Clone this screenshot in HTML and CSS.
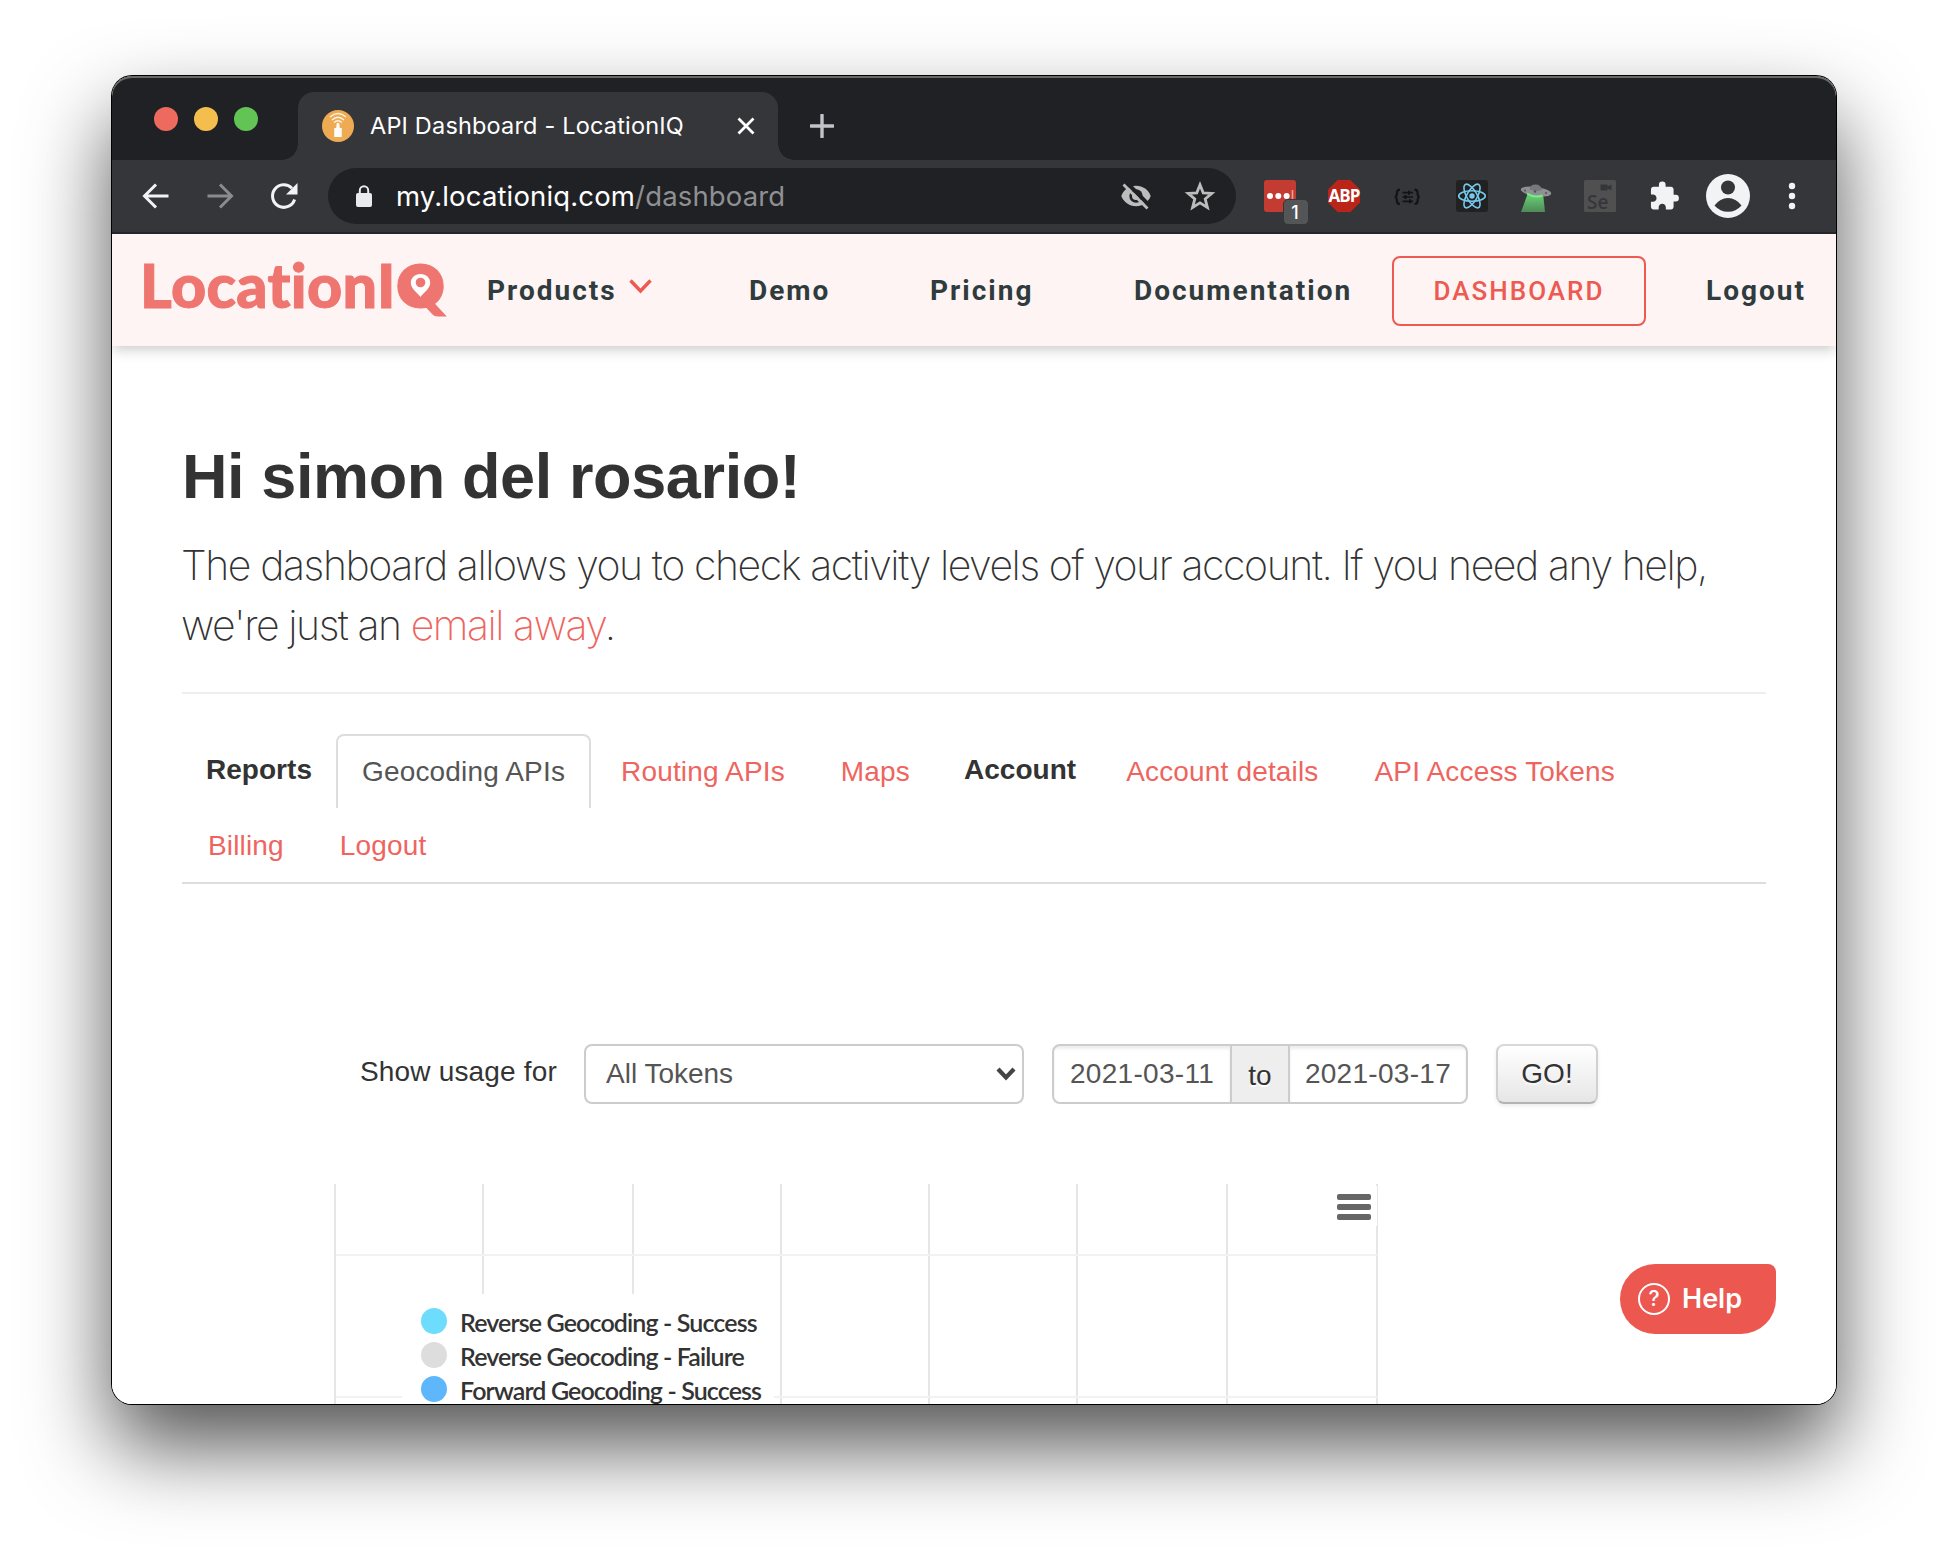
FILE: index.html
```html
<!DOCTYPE html>
<html lang="en">
<head>
<meta charset="utf-8">
<title>API Dashboard - LocationIQ</title>
<link rel="stylesheet" href="styles.css">
</head>
<body>
<div class="window">
  <div class="tabstrip">
    <div class="lights"><i class="red"></i><i class="yellow"></i><i class="green"></i></div>
    <div class="tab">
      <svg class="favicon" width="32" height="32" viewBox="0 0 32 32"><circle cx="16" cy="16" r="16" fill="#efab53"/><g fill="none" stroke="#fff" stroke-width="1.300" opacity=".85"><path d="M8 7Q16 0 24 7M10 10Q16 4.500 22 10M12 12.500Q16 9 20 12.500"/></g><path d="M14.800 13h2.400l.6 5h2v9h-7.600v-9h2z" fill="#fff" opacity=".95"/></svg>
      <span class="tab-title">API Dashboard - LocationIQ</span>
      <svg class="tab-close" width="20" height="20" viewBox="0 0 20 20"><path d="M2.500 2.500l15 15m0-15l-15 15" stroke="#fff" stroke-width="2.800"/></svg>
    </div>
    <svg class="newtab" width="24" height="24" viewBox="0 0 24 24"><path d="M12 1v22M1 12h22" stroke="#c0c4c9" stroke-width="3.400" stroke-linecap="round"/></svg>
  </div>

  <div class="toolbar">
    <svg class="nav-ico" width="32" height="32" viewBox="0 0 32 32"><path d="M28.500 16H5M16 4.500L4.500 16 16 27.500" fill="none" stroke="#f1f3f4" stroke-width="3"/></svg>
    <svg class="nav-ico" width="32" height="32" viewBox="0 0 32 32"><path d="M3.500 16H27M16 4.500L27.500 16 16 27.500" fill="none" stroke="#8a8b8e" stroke-width="3"/></svg>
    <svg class="nav-ico" width="32" height="32" viewBox="0 0 32 32"><path d="M26.600 19.500A11.300 11.300 0 1 1 24 8.200" fill="none" stroke="#f1f3f4" stroke-width="3"/><path d="M29.500 3v11.500H18z" fill="#f1f3f4"/></svg>
    <div class="omnibox">
      <svg width="18" height="22" viewBox="0 0 18 22"><rect x="1" y="8" width="16" height="14" rx="2" fill="#e8eaed"/><path d="M4.800 9V5.500a4.200 4.200 0 0 1 8.400 0V9" fill="none" stroke="#e8eaed" stroke-width="2"/></svg>
      <span class="url">my.locationiq.com<span class="path">/dashboard</span></span>
      <svg class="eye" width="32" height="32" viewBox="0 0 32 32"><path d="M16 5.800C9 5.800 3.500 10 1.300 16 3.500 22 9 26.200 16 26.200S28.500 22 30.700 16C28.500 10 23 5.800 16 5.800z" fill="#bdbdbd"/><circle cx="16" cy="16" r="6.700" fill="#202124"/><circle cx="16" cy="16" r="4" fill="#bdbdbd"/><path d="M5.500 1.500L31 27" stroke="#202124" stroke-width="4"/><path d="M3.500 4.500l24 24" stroke="#bdbdbd" stroke-width="2.800"/></svg>
      <svg class="star" width="32" height="32" viewBox="0 0 32 32"><path d="M16 4.800l3.200 8 8.600.6-6.600 5.500 2.200 8.500-7.400-4.600-7.400 4.600 2.200-8.500-6.600-5.500 8.600-.6z" fill="none" stroke="#bdbdbd" stroke-width="2.800"/></svg>
    </div>
    <div class="extensions">
      <div class="ext">
        <svg width="32" height="32" viewBox="0 0 32 32"><rect width="32" height="32" rx="3" fill="#c43b31"/><g fill="#fff"><circle cx="6" cy="16" r="3"/><circle cx="14.300" cy="16" r="3"/><circle cx="22.600" cy="16" r="3"/></g><path d="M28.500 10v10" stroke="#e9a09b" stroke-width="1.600"/></svg>
        <span class="badge">1</span>
      </div>
      <div class="ext">
        <svg width="32" height="32" viewBox="0 0 32 32"><path d="M9.500 0h13L32 9.500v13L22.500 32h-13L0 22.500v-13z" fill="#bb2418"/></svg>
        <span class="abp">ABP</span>
      </div>
      <svg width="32" height="32" viewBox="0 0 32 32"><g fill="none" stroke="#121314" stroke-width="2.200"><path d="M8 9.700Q5 9.700 5 12.500 5 16.500 3 17 5 17.500 5 21.500 5 24 8 24M22.500 9.700q3 0 3 2.800 0 4 2 4.500-2 .5-2 4.500 0 2.500-3 2.500"/><path d="M10.500 12.700h10.500M10.500 17h10.500M10.500 21.300h10.500" stroke-width="1.700"/><path d="M17 10.700v4M13.500 15v4M18 19.300v4" stroke-width="2"/></g></svg>
      <svg width="32" height="32" viewBox="0 0 32 32"><rect width="32" height="32" rx="3" fill="#212121"/><circle cx="16" cy="16" r="2.700" fill="#74c9ef"/><g fill="none" stroke="#74c9ef" stroke-width="1.600"><ellipse cx="16" cy="16" rx="13.300" ry="5.200"/><ellipse cx="16" cy="16" rx="13.300" ry="5.200" transform="rotate(60 16 16)"/><ellipse cx="16" cy="16" rx="13.300" ry="5.200" transform="rotate(120 16 16)"/></g></svg>
      <svg width="32" height="32" viewBox="0 0 32 32"><defs><linearGradient id="beam" x2="0" y2="1"><stop stop-color="#69d877"/><stop offset="1" stop-color="#4f8a57"/></linearGradient></defs><path d="M8 13h15l2 19H1z" fill="url(#beam)"/><ellipse cx="16" cy="11.500" rx="15.300" ry="4.600" transform="rotate(8 16 11.500)" fill="#8f9092"/><path d="M9.500 9.500Q10 4.500 15.500 4.500t6.500 5.500q-6 2-12.500-.5z" fill="#77787b"/><path d="M7 13.500q7 4.500 15.500 2" fill="none" stroke="#78ef88" stroke-width="2"/><g fill="#515255"><circle cx="5" cy="10.500" r="1"/><circle cx="15" cy="11.500" r="1.200"/><circle cx="26" cy="13" r="1"/></g></svg>
      <div class="ext">
        <svg width="32" height="32" viewBox="0 0 32 32"><rect width="32" height="32" rx="1.500" fill="#505050"/><path d="M16.500 4.500h7v2l4-2v6l-4-2v2h-7z" fill="#35363a"/></svg>
        <span class="se">Se</span>
      </div>
      <svg width="32" height="32" viewBox="0 0 24 24"><path transform="translate(.2 .1)" d="M20.500 11H19V7c0-1.100-.9-2-2-2h-4V3.500a2.500 2.500 0 0 0-5 0V5H4c-1.100 0-1.990.9-1.990 2v3.800H3.500c1.490 0 2.700 1.210 2.700 2.700s-1.210 2.700-2.700 2.700H2V20c0 1.100.9 2 2 2h3.800v-1.500c0-1.490 1.210-2.700 2.700-2.700s2.700 1.210 2.700 2.700V22H17c1.100 0 2-.9 2-2v-4h1.500a2.500 2.500 0 0 0 0-5z" fill="#f1f3f4"/></svg>
      <svg class="avatar" width="44" height="44" viewBox="0 0 44 44"><circle cx="22" cy="22" r="22" fill="#f1f3f4"/><circle cx="22" cy="13.500" r="7" fill="#35363a"/><path d="M8.500 31.500Q14 24 22 24t13.500 7.500Q30 37.800 22 37.800T8.500 31.500z" fill="#35363a"/></svg>
      <svg class="kebab" width="8" height="32" viewBox="0 0 8 32"><g fill="#f1f3f4"><circle cx="4" cy="6" r="3.200"/><circle cx="4" cy="16" r="3.200"/><circle cx="4" cy="26" r="3.200"/></g></svg>
    </div>
  </div>

  <div class="page">
    <header class="navbar">
      <a class="logo">LocationI<span class="logo-q">Q<svg width="46" height="44" viewBox="0 0 46 44"><ellipse cx="23" cy="22" rx="21.500" ry="21" fill="#ef7570"/><path d="M23.500 11c-5.700 0-9.700 4-9.700 8.700 0 6 6.500 9.600 9.700 14.300 3.200-4.700 9.700-8.300 9.700-14.300 0-4.700-4-8.700-9.700-8.700z" fill="#fff"/><circle cx="23.500" cy="19.500" r="4.800" fill="#ef7570"/></svg></span></a>
      <a>Products<svg class="caret" width="23" height="15" viewBox="0 0 23 15"><path d="M1.500 1.500l10 10.500 10-10.500" fill="none" stroke="#ee5a52" stroke-width="3.400"/></svg></a>
      <a>Demo</a>
      <a>Pricing</a>
      <a>Documentation</a>
      <a class="dash-btn">DASHBOARD</a>
      <a class="logout">Logout</a>
    </header>

    <main class="content">
      <h1>Hi simon del rosario!</h1>
      <p class="lead"><span class="line1">The dashboard allows you to check activity levels of your account. If you need any help,</span><br><span class="line2">we're just an <a>email away</a>.</span></p>
      <hr>
      <ul class="tabs">
        <li class="head">Reports</li>
        <li class="active">Geocoding APIs</li>
        <li>Routing APIs</li>
        <li>Maps</li>
        <li class="head">Account</li>
        <li>Account details</li>
        <li>API Access Tokens</li>
        <li>Billing</li>
        <li>Logout</li>
      </ul>

      <form class="filters">
        <label>Show usage for</label>
        <div class="select">All Tokens<svg width="20" height="14" viewBox="0 0 20 14"><path d="M2 2l8 8.500L18 2" fill="none" stroke="#444" stroke-width="4.200"/></svg></div>
        <div class="range"><span class="date">2021-03-11</span><span class="to">to</span><span class="date">2021-03-17</span></div>
        <div class="go">GO!</div>
      </form>

      <div class="chart">
        <svg class="grid" width="1044" height="220" viewBox="0 0 1044 220"><path d="M1 0v220M149 0v220M299 0v220M447 0v220M595 0v220M743 0v220M893 0v220M1043 0v220" stroke="#e4e4e4" stroke-width="1.800"/><path d="M2 71h1041M2 213h1041" stroke="#f2f2f2" stroke-width="2"/></svg>
        <div class="legend">
          <div><i class="cyan"></i>Reverse Geocoding - Success</div>
          <div><i class="grey"></i>Reverse Geocoding - Failure</div>
          <div><i class="blue"></i>Forward Geocoding - Success</div>
        </div>
        <div class="menu"><i></i><i></i><i></i></div>
      </div>
    </main>
    <div class="help"><span class="q">?</span>Help</div>
  </div>
</div>
</body>
</html>
```
FILE: styles.css
```css
* { box-sizing: border-box; }
body { margin: 0; padding: 76px 112px 148px; background: #fff; overflow: hidden; }
svg { display: block; flex: none; }
i { display: block; }

.window {
  position: relative;
  width: 1724px; height: 1328px;
  border-radius: 20px;
  overflow: hidden;
  background: #fff;
  box-shadow: 0 0 0 1px #000, 0 42px 84px rgba(0, 0, 0, .68);
}

/* Browser chrome */
.tabstrip {
  display: flex; align-items: flex-start;
  height: 84px; background: #202124;
  border-radius: 20px 20px 0 0;
  box-shadow: inset 0 2px 0 #686a6a;
}
.lights { display: flex; gap: 16px; padding: 31px 41px 0 42px; }
.lights i { width: 24px; height: 24px; border-radius: 50%; }
.red { background: #ed6a5e; }
.yellow { background: #f4be4f; }
.green { background: #61c454; }
.tab {
  position: relative;
  display: flex; align-items: center;
  width: 480px; height: 68px; margin: 16px 0 0 -1px;
  padding: 0 22px 0 24px;
  background: #35363a; border-radius: 16px 16px 0 0;
}
.tab::before, .tab::after {
  content: ""; position: absolute; bottom: 0; width: 16px; height: 16px;
}
.tab::before { left: -16px; background: radial-gradient(circle at 0 0, #202124 15.5px, #35363a 16px); }
.tab::after { right: -16px; background: radial-gradient(circle at 100% 0, #202124 15.5px, #35363a 16px); }
.tab-title {
  flex: 1; margin-left: 16px; white-space: nowrap;
  font: 400 23.5px/32px Inter, sans-serif; letter-spacing: .18px; color: #fff;
}
.newtab { margin: 38px 0 0 32px; }

.toolbar {
  display: flex; align-items: center;
  height: 74px; padding: 0 0 0 28px;
  background: #35363a; border-bottom: 2px solid #26272a;
}
.nav-ico { margin-right: 32px; }
.omnibox {
  display: flex; align-items: center;
  width: 908px; height: 56px; margin-left: -4px; padding: 0 20px 0 27px;
  border-radius: 28px; background: #202124;
}
.url { flex: 1; margin-left: 23px; font: 400 27.5px/40px Inter, sans-serif; letter-spacing: .15px; color: #fff; }
.path { color: #8f9093; }
.eye { margin-right: 32px; }
.extensions { display: flex; align-items: center; gap: 32px; margin-left: 28px; }
.ext { position: relative; }
.badge {
  position: absolute; left: 19px; top: 19px; width: 26px; height: 26px;
  border: 1px solid #35363a; border-radius: 5px; background: #545557;
  font: 500 18px/25px Inter, sans-serif; color: #fff; text-align: center; padding-right: 2px;
}
.abp {
  position: absolute; inset: 0; text-align: center; letter-spacing: -.9px;
  font: 700 17px/32px "Open Sans", sans-serif; color: #fff;
}
.se { position: absolute; left: 3px; top: 11px; font: 600 19px/22px "Open Sans", sans-serif; color: #35363a; }
.avatar { margin-left: -6px; }
.kebab { margin-left: 6px; }

/* Site header */
.page { position: relative; height: 1170px; background: #fff; }
.navbar {
  position: relative;
  display: grid; align-items: center;
  grid-template-columns: 343px 262px 181px 204px 258px 314px 1fr;
  height: 112px; padding: 2px 0 0 32px;
  background: #fdf4f3;
  box-shadow: 0 5px 12px -1px rgba(0, 0, 0, .2);
  font: 700 28px/40px Roboto, sans-serif; letter-spacing: 2px; color: #2f3b3d;
}
.navbar a { display: flex; align-items: center; }
.caret { margin: -9px 0 0 12px; }
.navbar .logo {
  align-items: baseline; margin: -12px 0 0 -4px;
  font: 900 61px/76px Lato, sans-serif; letter-spacing: .35px; color: #ef7570;
  -webkit-text-stroke: 1px #ef7570;
  filter: blur(.6px);
}
.logo-q { position: relative; }
.logo-q svg { position: absolute; left: 1px; top: 16px; }
.navbar .dash-btn {
  justify-content: center; width: 254px; height: 70px;
  border: 2px solid #ec5a52; border-radius: 8px;
  font-size: 26px; font-weight: 500; color: #ec5a52;
}

/* Dashboard */
.content { padding: 90px 70px 0; font: 28px/40px "Liberation Sans", Arial, sans-serif; color: #333; }
h1 { margin: 0; font-size: 63px; line-height: 80px; letter-spacing: -.39px; }
.lead { margin: 19px 0 37px -1px; font: 200 41px/60px Inter, sans-serif; color: #333; white-space: nowrap; }
.line1 { letter-spacing: -1.42px; }
.line2 { letter-spacing: -1.47px; }
.lead a, .tabs li { color: #ee6560; }
hr { height: 2px; margin: 0 0 40px; border: 0; background: #eee; }
.tabs {
  display: flex; flex-wrap: wrap; margin: 0; padding: 0;
  list-style: none; border-bottom: 2px solid #ddd;
}
.tabs li {
  height: 74px; margin-right: 4px; padding: 16px 24px; letter-spacing: .16px;
  border: 2px solid transparent; border-bottom: 0; border-radius: 8px 8px 0 0;
}
.tabs .head { margin: 0; padding: 16px 24px; border: 0; font-weight: 700; letter-spacing: .03px; color: #333; }
.tabs .active { border-color: #ddd; color: #555; }

.filters { display: flex; margin: 160px 0 80px 178px; }
.filters label { width: 224px; line-height: 56px; letter-spacing: .17px; white-space: nowrap; }
.select, .range { display: flex; height: 60px; border: 2px solid #ccc; border-radius: 8px; color: #555; background: #fff; }
.select { width: 440px; align-items: center; justify-content: space-between; padding: 0 6px 0 20px; }
.range { width: 416px; margin-left: 28px; line-height: 56px; overflow: hidden; }
.date { flex: 1; text-align: center; letter-spacing: .3px; box-shadow: inset 0 3px 3px rgba(0, 0, 0, .07); }
.to { width: 60px; text-align: center; line-height: 60px; color: #333; background: #eee; border: solid #ccc; border-width: 0 2px; text-shadow: 0 2px 0 #fff; }
.go {
  width: 102px; height: 60px; margin-left: 28px;
  border: 2px solid; border-color: #d9d9d9 #d0d0d0 #b3b3b3; border-radius: 8px;
  background: linear-gradient(#fff, #e6e6e6);
  box-shadow: 0 2px 4px rgba(0, 0, 0, .08);
  line-height: 56px; text-align: center; text-shadow: 0 2px 2px rgba(255, 255, 255, .75);
}

.chart { position: relative; width: 1044px; height: 220px; margin-left: 152px; overflow: hidden; }
.legend {
  position: absolute; left: 68px; top: 110px; width: 372px; height: 120px; padding: 10px 0 0 19px;
  background: #fff; font: 600 25px/34px Lato, sans-serif; letter-spacing: -.88px; white-space: nowrap;
}
.legend div { display: flex; align-items: center; height: 34px; padding-top: 1px; }
.legend i { width: 26px; height: 26px; margin: -1px 13px 0 0; border-radius: 50%; }
.cyan { background: #6edcfc; }
.grey { background: #ddd; }
.blue { background: #5db7fa; }
.menu {
  position: absolute; left: 996px; top: 2px; width: 47px; height: 40px; padding: 8px 0 0 7px;
  display: flex; flex-direction: column; gap: 4px; background: #fff;
}
.menu i { width: 34px; height: 6px; border-radius: 2px; background: #666; }

.help {
  position: absolute; right: 60px; bottom: 70px;
  display: flex; align-items: center; gap: 12px;
  width: 156px; height: 70px; padding-left: 18px;
  border-radius: 35px 8px 35px 35px; background: #ec5750;
  font: 600 27px/32px Inter, sans-serif; color: #fff;
}
.q {
  width: 32px; height: 32px; border: 2px solid #fff; border-radius: 50%;
  font: 500 21px/28px Inter, sans-serif; text-align: center;
}
```
